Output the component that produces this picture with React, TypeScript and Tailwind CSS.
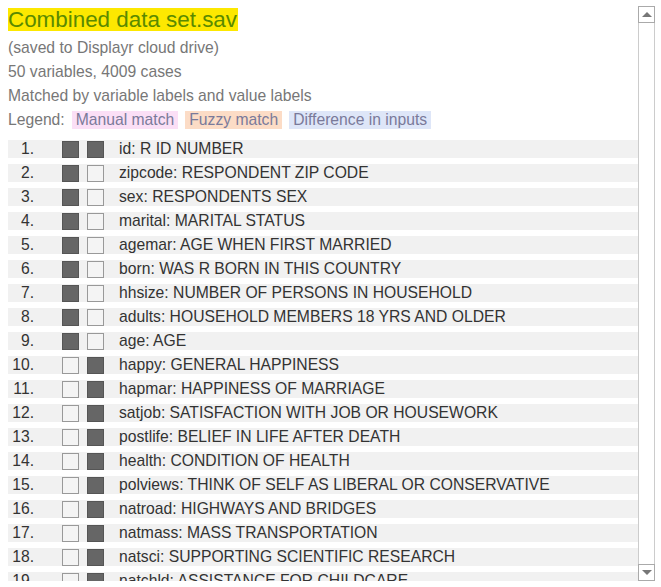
const rows: [string, string, boolean, boolean][] = [
  ["id", "R ID NUMBER", true, true],
  ["zipcode", "RESPONDENT ZIP CODE", true, false],
  ["sex", "RESPONDENTS SEX", true, false],
  ["marital", "MARITAL STATUS", true, false],
  ["agemar", "AGE WHEN FIRST MARRIED", true, false],
  ["born", "WAS R BORN IN THIS COUNTRY", true, false],
  ["hhsize", "NUMBER OF PERSONS IN HOUSEHOLD", true, false],
  ["adults", "HOUSEHOLD MEMBERS 18 YRS AND OLDER", true, false],
  ["age", "AGE", true, false],
  ["happy", "GENERAL HAPPINESS", false, true],
  ["hapmar", "HAPPINESS OF MARRIAGE", false, true],
  ["satjob", "SATISFACTION WITH JOB OR HOUSEWORK", false, true],
  ["postlife", "BELIEF IN LIFE AFTER DEATH", false, true],
  ["health", "CONDITION OF HEALTH", false, true],
  ["polviews", "THINK OF SELF AS LIBERAL OR CONSERVATIVE", false, true],
  ["natroad", "HIGHWAYS AND BRIDGES", false, true],
  ["natmass", "MASS TRANSPORTATION", false, true],
  ["natsci", "SUPPORTING SCIENTIFIC RESEARCH", false, true],
  ["natchld", "ASSISTANCE FOR CHILDCARE", false, true],
  ["natpark", "PARKS AND RECREATION", false, true],
];

function Box({ on }: { on: boolean }) {
  return on ? (
    <span className="h-[17px] w-[17px] border border-[#555] bg-[#666]" />
  ) : (
    <span className="h-[17px] w-[17px] border border-[#999] bg-[#f4f4f4]" />
  );
}

function App() {
  return (
    <div className="h-[587px] w-[661px] overflow-hidden bg-white font-['Liberation_Sans',Arial,sans-serif]">
      <div className="flex h-[581px]">
        <div className="flex-1 overflow-hidden pl-2">
          <h1 className="mt-2 inline-block bg-[#fde800] pr-[1px] text-[22.4px] leading-[23px] text-[#5a8a00]">
            Combined data set.sav
          </h1>
          <div className="mt-[2px] text-[15.7px] leading-6 text-[#777]">
            <p>(saved to Displayr cloud drive)</p>
            <p>50 variables, 4009 cases</p>
            <p>Matched by variable labels and value labels</p>
            <p className="flex items-center gap-[7px]">
              <span>Legend:</span>
              <span className="bg-[#fbdff6] px-[4px] leading-[18px] text-[#7a7a9a]">Manual match</span>
              <span className="bg-[#fcdcc6] px-[4px] leading-[18px] text-[#7a7a9a]">Fuzzy match</span>
              <span className="bg-[#dee6f8] px-[4px] leading-[18px] text-[#7a7a9a]">Difference in inputs</span>
            </p>
          </div>
          <div className="mt-[8px] flex flex-col gap-[6px]">
            {rows.map(([name, label, a, b], i) => (
              <div key={name} className="flex h-[18px] items-center bg-[#f1f1f1] text-[15.7px] text-[#333]">
                <span className="w-[26px] text-right">{i + 1}.</span>
                <span className="ml-[28px] flex gap-[8px]">
                  <Box on={a} />
                  <Box on={b} />
                </span>
                <span className="ml-[15px] whitespace-nowrap">
                  {name}: {label}
                </span>
              </div>
            ))}
          </div>
        </div>
        <div className="mt-[6px] flex w-[17px] flex-col">
          <div className="flex h-[17px] items-center justify-center border border-[#aaa] bg-white">
            <span className="h-0 w-0 border-x-[5px] border-b-[5px] border-x-transparent border-b-[#777]" />
          </div>
          <div className="flex-1 border-x border-[#ccc]" />
          <div className="flex h-[17px] items-center justify-center border border-[#aaa] bg-white">
            <span className="h-0 w-0 border-x-[5px] border-t-[5px] border-x-transparent border-t-[#777]" />
          </div>
        </div>
        <div className="w-[6px]" />
      </div>
    </div>
  );
}

export default App;
